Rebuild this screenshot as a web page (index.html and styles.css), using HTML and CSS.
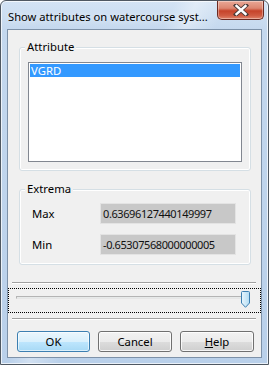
FILE: index.html
```html
<!DOCTYPE html>
<html>
<head>
<meta charset="utf-8">
<link rel="stylesheet" href="styles.css">
</head>
<body>
<div class="window">
  <div class="titlebar">
    <span class="title">Show attributes on watercourse syst...</span>
    <span class="close">
      <svg width="16" height="12" viewBox="0 0 16 12">
        <path d="M3 1.5 L13 10.5 M13 1.5 L3 10.5" stroke="#4a3a38" stroke-width="4.2" stroke-linecap="square"/>
        <path d="M3.5 2 L12.5 10 M12.5 2 L3.5 10" stroke="#ffffff" stroke-width="2.4" stroke-linecap="square"/>
      </svg>
    </span>
  </div>
  <div class="client">
    <div class="group group-attr">
      <span class="group-label">Attribute</span>
      <div class="listbox">
        <div class="list-item selected">VGRD</div>
      </div>
    </div>
    <div class="group group-extrema">
      <span class="group-label">Extrema</span>
      <div class="field">
        <span class="field-label">Max</span>
        <span class="textbox">0.63696127440149997</span>
      </div>
      <div class="field">
        <span class="field-label">Min</span>
        <span class="textbox">-0.65307568000000005</span>
      </div>
    </div>
    <div class="separator sep-top"></div>
    <div class="slider">
      <div class="track"></div>
      <svg class="thumb" width="9" height="17" viewBox="0 0 9 17">
        <defs>
          <linearGradient id="tg" x1="0" y1="0" x2="1" y2="0">
            <stop offset="0" stop-color="#e9f6fd"/>
            <stop offset="1" stop-color="#b2dcf3"/>
          </linearGradient>
        </defs>
        <path d="M0.5 1.5 Q0.5 0.5 1.5 0.5 L7.5 0.5 Q8.5 0.5 8.5 1.5 L8.5 12 L4.5 16.3 L0.5 12 Z" fill="url(#tg)" stroke="#3c7fb1"/>
      </svg>
    </div>
    <div class="separator sep-bottom"></div>
    <div class="buttons">
      <button class="btn btn-default">OK</button>
      <button class="btn">Cancel</button>
      <button class="btn"><u>H</u>elp</button>
    </div>
  </div>
</div>
</body>
</html>
```

FILE: styles.css
```css
html, body {
  margin: 0;
  padding: 0;
}
body {
  width: 269px;
  height: 365px;
  overflow: hidden;
  font-family: "Noto Sans", "Open Sans", sans-serif;
  font-size: 11.3px;
  color: #000;
  background: #ffffff;
}
.window {
  box-sizing: border-box;
  width: 269px;
  height: 365px;
  border: 1px solid #4f5862;
  border-radius: 6px 6px 0 0;
  background:
    linear-gradient(115deg, rgba(255,255,255,0) 0 40%, rgba(255,255,255,0.35) 45%, rgba(255,255,255,0) 52%),
    linear-gradient(to bottom, #d3e3f4 0, #c4d8ee 30px, #b9d0ea 100%);
  box-shadow: inset 0 0 0 1px rgba(255,255,255,0.7);
  display: flex;
  flex-direction: column;
  padding: 0 6px 6px 6px;
}
.titlebar {
  height: 28px;
  display: flex;
  align-items: flex-start;
}
.title {
  margin-top: 9px;
  margin-left: 1px;
  font-size: 11.2px;
  line-height: 14px;
  white-space: nowrap;
  color: #000;
  text-shadow: 0 0 6px rgba(255,255,255,0.9);
}
.close {
  margin-left: auto;
  margin-right: -2px;
  width: 47px;
  height: 19px;
  box-sizing: border-box;
  border: 1px solid #6b2a22;
  border-top: none;
  border-radius: 0 0 5px 5px;
  background: linear-gradient(to bottom, #e9a896 0, #dc8670 40%, #c6432a 55%, #cf5a41 80%, #e0836a 100%);
  box-shadow: inset 0 0 0 1px rgba(255,255,255,0.35);
  display: flex;
  align-items: center;
  justify-content: center;
}
.client {
  flex: 1;
  border: 1px solid #7d91a8;
  background: #f0f0f0;
  display: flex;
  flex-direction: column;
}
.group {
  box-sizing: border-box;
  width: 232px;
  margin-left: 11px;
  border: 1px solid #d5dfe5;
  border-radius: 3px;
  box-shadow: inset 0 0 0 1px #ffffff;
  display: flex;
  flex-direction: column;
}
.group-attr {
  margin-top: 17px;
  height: 124px;
  padding: 0 8px 8px 8px;
}
.group-extrema {
  margin-top: 18px;
  height: 76px;
  padding: 0 0 9px 12px;
}
.group-label {
  align-self: flex-start;
  margin-top: -9px;
  margin-left: -3px;
  padding: 0 2px;
  line-height: 15px;
  background: #f0f0f0;
}
.group-extrema .group-label {
  margin-left: -7px;
}
.listbox {
  box-sizing: border-box;
  margin-top: 8px;
  height: 100px;
  border: 1px solid #828790;
  background: #ffffff;
  padding: 1px;
}
.list-item {
  height: 13px;
  line-height: 13px;
  padding-left: 1px;
}
.list-item.selected {
  background: #3399ff;
  color: #ffffff;
}
.field {
  display: flex;
  align-items: center;
  height: 21px;
}
.group-extrema .field:first-of-type {
  margin-top: 7px;
}
.field + .field {
  margin-top: 10px;
}
.field-label {
  width: 68px;
}
.textbox {
  box-sizing: border-box;
  width: 136px;
  height: 21px;
  line-height: 19px;
  padding-left: 2px;
  border: 1px solid #e3e3e3;
  background: #c8c8c8;
  color: #111;
  font-size: 11px;
  letter-spacing: -0.4px;
}
.separator {
  height: 1px;
  margin: 0 5px 0 4px;
  background: #a0a0a0;
  border-bottom: 1px solid #ffffff;
}
.sep-top {
  margin-top: 17px;
}
.slider {
  box-sizing: border-box;
  margin-top: 4px;
  height: 25px;
  border: 1px dotted #000;
  display: flex;
  align-items: flex-start;
  padding-left: 7px;
}
.track {
  box-sizing: border-box;
  width: 233px;
  height: 3px;
  margin-top: 7px;
  border: 1px solid #b4b4b4;
  border-right-color: #e6e6e6;
  border-bottom-color: #e6e6e6;
  background: #e7eaea;
}
.thumb {
  margin-left: -8px;
  margin-top: 2px;
  display: block;
}
.sep-bottom {
  margin-top: 5px;
}
.buttons {
  display: flex;
  gap: 8px;
  margin-top: 11px;
  padding-left: 9px;
}
.btn {
  box-sizing: border-box;
  width: 74px;
  height: 21px;
  padding: 0;
  border: 1px solid #707070;
  border-radius: 3px;
  background: linear-gradient(to bottom, #f2f2f2 0, #ebebeb 50%, #dddddd 51%, #cfcfcf 100%);
  box-shadow: inset 0 0 0 1px rgba(255,255,255,0.8);
  font-family: "Noto Sans", "Open Sans", sans-serif;
  font-size: 11.3px;
  color: #000;
  line-height: 18px;
}
.btn-default {
  width: 73px;
  border-color: #3c7fb1;
  background: linear-gradient(to bottom, #eaf6fd 0, #d9f0fc 50%, #bee6fd 51%, #a7d9f5 100%);
  box-shadow: inset 0 0 0 1px rgba(255,255,255,0.6);
}
```
